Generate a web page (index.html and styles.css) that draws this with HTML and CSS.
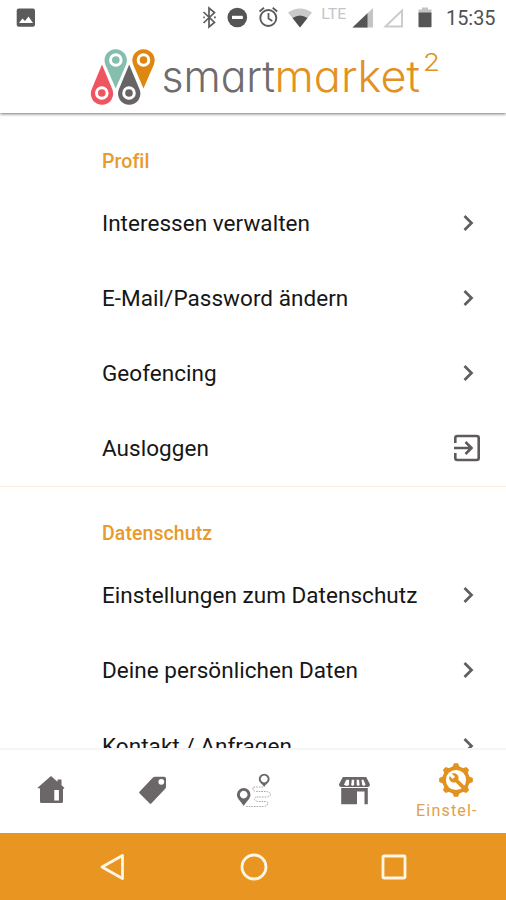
FILE: index.html
```html
<!DOCTYPE html>
<html lang="de">
<head>
<meta charset="utf-8">
<title>smartmarket²</title>
<link rel="stylesheet" href="styles.css">
</head>
<body>
<div class="app">
  <header class="header">
    <div class="status">
      <svg class="photo" width="20" height="20" viewBox="0 0 20 20"><rect x=".7" y=".5" width="18.3" height="18.2" rx="2" fill="#5b5b5b"/><path d="M3 15l3.500-4.500 2.500 2.500 3.500-4.500 4.500 6.500z" fill="#fff"/></svg>
      <svg width="304" height="36" viewBox="200 0 304 36">
        <path d="M203.500 12l11 10.500-5.500 4.500V8l5.500 4.500-11 10.500" fill="none" stroke="#5b5b5b" stroke-width="1.700"/>
        <path d="M203.300 17.300h1.500M214 17.300h1.800" stroke="#5b5b5b" stroke-width="1.800"/>
        <circle cx="237.300" cy="17.500" r="9.800" fill="#555"/><rect x="232" y="15.800" width="10.800" height="3.200" fill="#fff"/>
        <circle cx="268.300" cy="18" r="8" fill="none" stroke="#5b5b5b" stroke-width="1.900"/>
        <path d="M268.500 13v5.500l3.800 2.500M259.500 11.500l4.500-3.700M277.200 11.500l-4.500-3.700" fill="none" stroke="#5b5b5b" stroke-width="1.800"/>
        <path d="M288 12.500Q300 4.500 312 12.500L300 27.500z" fill="#c9c9c9"/><path d="M292.500 18Q300 13 307.500 18L300 27.500z" fill="#4f4f4f"/>
        <text class="lte" x="321.200" y="18.800" textLength="25" lengthAdjust="spacingAndGlyphs">LTE</text>
        <path d="M352.500 27.500L373 8v19.500z" fill="#c4c4c4"/><path d="M352.500 27.500L367.500 13.200v14.300z" fill="#555"/>
        <path d="M385.500 26.500L402 10.500v16z" fill="none" stroke="#cbcbcb" stroke-width="1.900"/>
        <path d="M418.500 9.500h3.500V7.500h6v2h3.500v4h-13z" fill="#c4c4c4"/><rect x="418.500" y="12.500" width="13" height="14.700" rx=".8" fill="#555"/>
        <text class="clock" x="446" y="25.300" textLength="49.500" lengthAdjust="spacingAndGlyphs">15:35</text>
      </svg>
    </div>
    <svg class="logo" width="360" height="64" viewBox="85 44 360 64">
      <g>
        <path d="M102 64.500L112.400 89.500A11.200 11.200 0 1 1 91.600 89.500Z" fill="#ee5561"/>
        <path d="M115.700 88.500L126.300 64A11.200 11.200 0 1 0 105.100 64Z" fill="#85bdae"/>
        <path d="M129.200 64.500L139.600 89.500A11.200 11.200 0 1 1 118.800 89.500Z" fill="#686466"/>
        <path d="M143.500 88.500L154.100 64A11.200 11.200 0 1 0 132.900 64Z" fill="#dd8710"/>
      </g>
      <g fill="none" stroke="#fff" stroke-width="3">
        <circle cx="101.800" cy="93" r="5.300"/><circle cx="115.800" cy="60" r="5.300"/><circle cx="129" cy="93" r="5.300"/><circle cx="143.500" cy="60" r="5.300"/>
      </g>
      <text class="word grey" x="161.500" y="91.800" textLength="113.500" lengthAdjust="spacingAndGlyphs">smart</text>
      <text class="word gold" x="274.500" y="91.800" textLength="145.500" lengthAdjust="spacingAndGlyphs">market</text>
      <text class="sup gold" x="423" y="71" textLength="17" lengthAdjust="spacingAndGlyphs">2</text>
    </svg>
  </header>

  <main class="content">
    <section class="section">
      <h2 class="heading">Profil</h2>
      <div class="row"><span>Interessen verwalten</span><svg class="chev" viewBox="0 0 14 18"><path d="M2.500 2l7 7-7 7"/></svg></div>
      <div class="row"><span>E-Mail/Password ändern</span><svg class="chev" viewBox="0 0 14 18"><path d="M2.500 2l7 7-7 7"/></svg></div>
      <div class="row"><span>Geofencing</span><svg class="chev" viewBox="0 0 14 18"><path d="M2.500 2l7 7-7 7"/></svg></div>
      <div class="row"><span>Ausloggen</span><svg class="exit" viewBox="0 0 28 28"><path d="M2.300 9V4a2 2 0 0 1 2-2h19.400a2 2 0 0 1 2 2v20a2 2 0 0 1-2 2H4.300a2 2 0 0 1-2-2v-5M1 14h16.500M12.500 8l6 6-6 6"/></svg></div>
    </section>
    <section class="section">
      <h2 class="heading">Datenschutz</h2>
      <div class="row"><span>Einstellungen zum Datenschutz</span><svg class="chev" viewBox="0 0 14 18"><path d="M2.500 2l7 7-7 7"/></svg></div>
      <div class="row"><span>Deine persönlichen Daten</span><svg class="chev" viewBox="0 0 14 18"><path d="M2.500 2l7 7-7 7"/></svg></div>
      <div class="row"><span>Kontakt / Anfragen</span><svg class="chev" viewBox="0 0 14 18"><path d="M2.500 2l7 7-7 7"/></svg></div>
    </section>
  </main>

  <nav class="tabs">
    <div class="tab"><svg width="28" height="28" viewBox="37 776 28 28"><path d="M37.300 788L51 776l6.500 5.700V779.500h4v5.800l3 2.700-1.500 1.200V801.500q0 1.500-1.500 1.500H41.500q-1.500 0-1.500-1.500V788.500z" fill="#6b6667"/><rect x="54.300" y="790" width="4.600" height="10.500" fill="#fff"/></svg></div>
    <div class="tab"><svg width="30" height="28" viewBox="137 776 30 28"><path d="M153 777.500q.8-.8 2-.8h9q2 0 2 2v8.300q0 1-.8 1.800L151.500 803.300q-1 1-2 0l-9.800-9.800q-1-1 0-2z" fill="#6b6667"/><circle cx="161.300" cy="781.800" r="2.900" fill="#fff"/></svg></div>
    <div class="tab"><svg width="36" height="36" viewBox="235 772 36 36"><path fill-rule="evenodd" d="M243.700 788a6.800 6.800 0 0 1 6.800 6.800c0 4-4.300 7-6.800 11.200-2.500-4.200-6.800-7.200-6.800-11.200a6.800 6.800 0 0 1 6.800-6.800zm0 2.800a3.800 3.800 0 1 0 .01 0zM264.200 773.700a5.400 5.400 0 0 1 5.400 5.400c0 3.300-3.400 4.800-5.400 8-2-3.200-5.400-4.700-5.400-8a5.400 5.400 0 0 1 5.400-5.400zm0 1.900a3.400 3.400 0 1 0 .01 0z" fill="#6b6667"/><path d="M263 787h-8q-3 0-2 2.500 1 2 4 2h9q4 .5 4.500 2.500-.5 3-4.500 3h-8q-4 0-3.500 2.500 1 2 4.500 2h7q3 .5 1 3.500-1 1.500-4 1.500h-17" fill="none" stroke="#aaa6a7" stroke-width="1" stroke-dasharray="1.600 1"/></svg></div>
    <div class="tab"><svg width="32" height="30" viewBox="338.500 775 32 30"><path d="M343.300 776.900h23.400l3.600 7.100c.4 1.800-.7 3-2.300 3h-26c-1.600 0-2.700-1.200-2.300-3z" fill="#6b6667"/><path d="M346.800 779.800h2.800v5q-1.500 2.300-5.200 0zM352.300 779.800h2.300v5q-1.100 2-2.900.2zM357.200 779.800h2.300l.6 5.200q-1.900 1.800-2.900-.2zM362 779.800h1.900l2.200 5q-2.100 2.300-3.500 0z" fill="#fff"/><path d="M341.700 788h26.600v16.300h-3.300V791.500h-7.500v12.800h-15.800z" fill="#6b6667"/></svg></div>
    <div class="tab active">
      <svg width="40" height="36" viewBox="-21 -18 40 36">
        <g fill="#e2921f"><circle r="13.700"/>
          <path d="M-4-12L-2-16.800H2L4-12zM-4 12L-2 16.800H2L4 12zM-12-4L-16.800-2V2L-12 4zM12-4L16.800-2V2L12 4z"/>
          <path transform="rotate(45)" d="M-4-12L-2-16.500H2L4-12zM-4 12L-2 16.500H2L4 12zM-12-4L-16.500-2V2L-12 4zM12-4L16.500-2V2L12 4z"/>
        </g>
        <circle r="10.100" fill="#fff"/>
        <path transform="translate(-7.500 -7.500) scale(.72)" fill="#e2921f" d="M22.700 19l-9.100-9.100c.9-2.300.4-5-1.500-6.900-2-2-5-2.400-7.400-1.300L9 6 6 9 1.600 4.700C.4 7.100.9 10.100 2.900 12.100c1.900 1.900 4.600 2.400 6.900 1.500l9.100 9.100c.4.4 1 .4 1.400 0l2.300-2.300c.5-.4.5-1.100.1-1.400z"/>
      </svg>
      <span class="label">Einstel-</span>
    </div>
  </nav>
  <footer class="sysnav">
    <svg width="28" height="30" viewBox="0 0 28 30"><path d="M23.500 3.500v23L3 15z"/></svg>
    <svg width="30" height="30" viewBox="0 0 30 30"><circle cx="15" cy="15" r="12"/></svg>
    <svg width="28" height="28" viewBox="0 0 28 28"><rect x="3" y="3" width="22" height="22" rx="1"/></svg>
  </footer>
</div>
</body>
</html>
```
FILE: styles.css
```css
* { box-sizing: border-box; }
body { margin: 0; background: #fff; font-family: Roboto, "Liberation Sans", sans-serif; }
svg { display: block; flex: none; }
.app { width: 506px; height: 900px; display: flex; flex-direction: column; overflow: hidden; }
.header { height: 113px; flex: none; background: #fff; box-shadow: 0 1px 3px rgba(0, 0, 0, .55); z-index: 1; }
.status { height: 36px; display: flex; justify-content: space-between; padding: 0 2px 0 16px; }
.photo { margin-top: 8px; }
.lte { font-size: 15px; fill: #c6c6c6; }
.clock { font-size: 20px; fill: #505050; }
.logo { margin: 8px 0 0 85px; }
.word { font-family: Inter, sans-serif; font-size: 43px; font-weight: 300; font-feature-settings: "cv11"; }
.sup { font-family: Inter, sans-serif; font-size: 24.500px; font-weight: 300; }
.grey { fill: #706c6d; }
.gold { fill: #e2921f; }
.content { flex: 1; min-height: 0; overflow: hidden; padding-top: 1.500px; }
.section + .section { border-top: 1px solid #fbeedd; }
.heading { height: 70.800px; margin: 0; padding: 22px 0 0 102px; line-height: 49px; font-size: 19.500px; font-weight: 500; letter-spacing: .08px; color: #e89a2c; }
.section + .section .heading { height: 70.500px; }
.row { height: 75.200px; padding: 0 25px 0 102px; display: flex; align-items: center; justify-content: space-between; font-size: 22.500px; letter-spacing: .04px; color: #161616; white-space: nowrap; }
.chev { width: 14px; height: 18px; margin-right: 5.500px; fill: none; stroke: #5f5f5f; stroke-width: 2.700; }
.exit { width: 28px; height: 28px; fill: none; stroke: #5f5b5c; stroke-width: 2.600; }
.tabs { height: 85px; flex: none; display: grid; grid-template-columns: repeat(5, 1fr); border-top: 2px solid #f5f5f5; background: #fff; }
.tab { display: flex; flex-direction: column; align-items: center; justify-content: center; padding-bottom: 3px; }
.tab.active { justify-content: flex-start; padding-top: 12px; }
.label { font-size: 16px; line-height: 22px; letter-spacing: 1.200px; color: #e2a04a; margin: 2px 17px 0 0; }
.sysnav { height: 67px; flex: none; display: flex; align-items: center; justify-content: space-between; padding: 0 98px 0 99px; background: #e89522; }
.sysnav svg { fill: none; stroke: #fff6e6; stroke-width: 2.800; stroke-linejoin: round; }
```
